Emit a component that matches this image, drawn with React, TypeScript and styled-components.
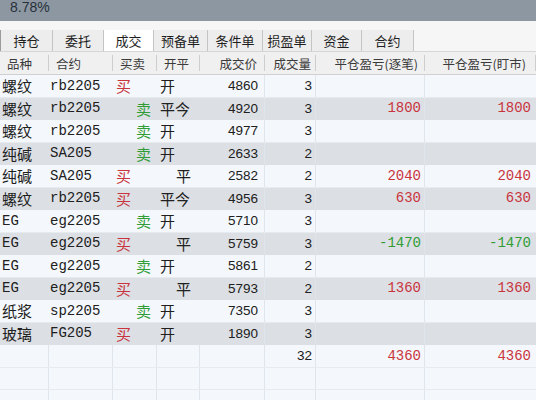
import React from "react";
import styled, { createGlobalStyle } from "styled-components";

const Global = createGlobalStyle`
  html, body { margin: 0; padding: 0; background: #f4f7fb; }
  body { width: 536px; height: 400px; overflow: hidden; font-family: "Noto Sans CJK SC", "Liberation Sans", sans-serif; }
`;

const COLS = "49px 64px 44px 43px 65px 51px 109px 111px";

const Page = styled.div`
  width: 536px;
  height: 400px;
  display: flex;
  flex-direction: column;
  overflow: hidden;
  & > * { flex-shrink: 0; }
`;

const TopBar = styled.div`
  height: 21px;
  background: #8d97a2;
  color: #27313b;
  font-family: "Liberation Sans", sans-serif;
  font-size: 14px;
  line-height: 14px;
  padding-left: 10px;
  box-sizing: border-box;
`;

const Spacer = styled.div`
  height: 9px;
  background: #f6f6f6;
`;

const Tabs = styled.div`
  height: 21px;
  display: flex;
  background: #f0f0f0;
  border-left: 1px solid #9a9a9a;
  box-sizing: border-box;
`;

const Tab = styled.div<{ $w: number; $active?: boolean }>`
  width: ${(p) => p.$w}px;
  flex: none;
  display: flex;
  align-items: center;
  justify-content: center;
  font-size: 13px;
  color: #1e1e1e;
  background: ${(p) => (p.$active ? "#ffffff" : "#ededed")};
  border-right: 1px solid #c4c4c4;
  box-sizing: border-box;
`;

const TabFill = styled.div`
  flex: 1;
  background: #f6f6f6;
`;

const HeaderRow = styled.div`
  height: 24px;
  display: grid;
  grid-template-columns: ${COLS};
  background: #f0f0f0;
  border-top: 1px solid #d6d6d6;
  border-bottom: 1px solid #d0d0d0;
  box-sizing: border-box;
`;

const HeadCell = styled.div<{ $align?: string; $pl?: number; $pr?: number }>`
  display: flex;
  align-items: center;
  justify-content: ${(p) => p.$align || "flex-start"};
  padding-left: ${(p) => p.$pl ?? 0}px;
  padding-right: ${(p) => p.$pr ?? 0}px;
  font-size: 12.5px;
  color: #3a3a3a;
  border-right: 1px solid #cdcdcd;
  margin: 3px 0;
  white-space: nowrap;
  overflow: hidden;
`;

const Body = styled.div`
  display: flex;
  flex-direction: column;
`;

const Row = styled.div<{ $alt?: boolean }>`
  height: 22.5px;
  flex: none;
  display: grid;
  grid-template-columns: ${COLS};
  background: ${(p) => (p.$alt ? "#dcdfe4" : "#f4f8fc")};
  border-bottom: 1px solid ${(p) => (p.$alt ? "#dcdfe4" : "#e6ebf0")};
  box-sizing: border-box;
`;

const Cell = styled.div<{ $align?: string; $pl?: number; $pr?: number; $color?: string; $font?: "cjk" | "mono" | "sans"; $line?: boolean }>`
  display: flex;
  align-items: center;
  justify-content: ${(p) => p.$align || "flex-start"};
  padding-left: ${(p) => p.$pl ?? 0}px;
  padding-right: ${(p) => p.$pr ?? 0}px;
  color: ${(p) => p.$color || "#202020"};
  font-family: ${(p) =>
    p.$font === "mono"
      ? '"Liberation Mono", "DejaVu Sans Mono", monospace'
      : p.$font === "sans"
      ? '"Liberation Sans", sans-serif'
      : '"Noto Sans CJK SC", sans-serif'};
  font-size: ${(p) => (p.$font === "mono" ? "14px" : p.$font === "sans" ? "13.5px" : "15px")};
  white-space: nowrap;
  overflow: hidden;
  border-right: 1px solid ${(p) => (p.$line ? "#dfe5ec" : "transparent")};
`;

const RED = "#c9343c";
const GREEN = "#2f9d34";

type Trade = {
  name: string;
  code: string;
  side: "买" | "卖";
  oc: "开" | "平" | "平今";
  price: string;
  qty: string;
  pnl1?: string;
  pnl2?: string;
};

const trades: Trade[] = [
  { name: "螺纹", code: "rb2205", side: "买", oc: "开", price: "4860", qty: "3" },
  { name: "螺纹", code: "rb2205", side: "卖", oc: "平今", price: "4920", qty: "3", pnl1: "1800", pnl2: "1800" },
  { name: "螺纹", code: "rb2205", side: "卖", oc: "开", price: "4977", qty: "3" },
  { name: "纯碱", code: "SA205", side: "卖", oc: "开", price: "2633", qty: "2" },
  { name: "纯碱", code: "SA205", side: "买", oc: "平", price: "2582", qty: "2", pnl1: "2040", pnl2: "2040" },
  { name: "螺纹", code: "rb2205", side: "买", oc: "平今", price: "4956", qty: "3", pnl1: "630", pnl2: "630" },
  { name: "EG", code: "eg2205", side: "卖", oc: "开", price: "5710", qty: "3" },
  { name: "EG", code: "eg2205", side: "买", oc: "平", price: "5759", qty: "3", pnl1: "-1470", pnl2: "-1470" },
  { name: "EG", code: "eg2205", side: "卖", oc: "开", price: "5861", qty: "2" },
  { name: "EG", code: "eg2205", side: "买", oc: "平", price: "5793", qty: "2", pnl1: "1360", pnl2: "1360" },
  { name: "纸浆", code: "sp2205", side: "卖", oc: "开", price: "7350", qty: "3" },
  { name: "玻璃", code: "FG205", side: "买", oc: "开", price: "1890", qty: "3" },
];

const tabs: [string, number][] = [
  ["持仓", 52],
  ["委托", 51],
  ["成交", 50],
  ["预备单", 54],
  ["条件单", 55],
  ["损盈单", 49],
  ["资金", 50],
  ["合约", 52],
];

const pnlColor = (v?: string) => (v && v.startsWith("-") ? GREEN : RED);

export default function App() {
  return (
    <Page>
      <Global />
      <TopBar>8.78%</TopBar>
      <Spacer />
      <Tabs>
        {tabs.map(([t, w]) => (
          <Tab key={t} $w={w} $active={t === "成交"}>
            {t}
          </Tab>
        ))}
        <TabFill />
      </Tabs>
      <HeaderRow>
        <HeadCell $pl={7}>品种</HeadCell>
        <HeadCell $pl={7}>合约</HeadCell>
        <HeadCell $pl={7}>买卖</HeadCell>
        <HeadCell $pl={7}>开平</HeadCell>
        <HeadCell $align="flex-end" $pr={7}>成交价</HeadCell>
        <HeadCell $align="flex-end" $pr={4}>成交量</HeadCell>
        <HeadCell $align="flex-end" $pr={6}>平仓盈亏(逐笔)</HeadCell>
        <HeadCell $align="flex-end" $pr={9}>平仓盈亏(盯市)</HeadCell>
      </HeaderRow>
      <Body>
        {trades.map((t, i) => (
          <Row key={i} $alt={i % 2 === 1}>
            <Cell $pl={2} $font={/^[A-Z]/.test(t.name) ? "mono" : "cjk"}>{t.name}</Cell>
            <Cell $pl={1} $font="mono">{t.code}</Cell>
            <Cell
              $pl={t.side === "买" ? 3 : 23}
              $color={t.side === "买" ? RED : GREEN}
            >
              {t.side}
            </Cell>
            <Cell $pl={t.oc === "平" ? 19 : 3}>{t.oc}</Cell>
            <Cell $align="flex-end" $pr={6} $font="sans" $line>{t.price}</Cell>
            <Cell $align="flex-end" $pr={3} $font="sans" $line>{t.qty}</Cell>
            <Cell $align="flex-end" $pr={3} $font="mono" $color={pnlColor(t.pnl1)} $line>
              {t.pnl1}
            </Cell>
            <Cell $align="flex-end" $pr={4} $font="mono" $color={pnlColor(t.pnl2)}>
              {t.pnl2}
            </Cell>
          </Row>
        ))}
        <Row>
          <Cell $line />
          <Cell $line />
          <Cell $line />
          <Cell $line />
          <Cell $line />
          <Cell $align="flex-end" $pr={3} $font="sans" $line>32</Cell>
          <Cell $align="flex-end" $pr={3} $font="mono" $color={RED} $line>4360</Cell>
          <Cell $align="flex-end" $pr={4} $font="mono" $color={RED}>4360</Cell>
        </Row>
        {[0, 1].map((k) => (
          <Row key={`e${k}`}>
            <Cell $line />
            <Cell $line />
            <Cell $line />
            <Cell $line />
            <Cell $line />
            <Cell $line />
            <Cell $line />
            <Cell />
          </Row>
        ))}
      </Body>
    </Page>
  );
}
